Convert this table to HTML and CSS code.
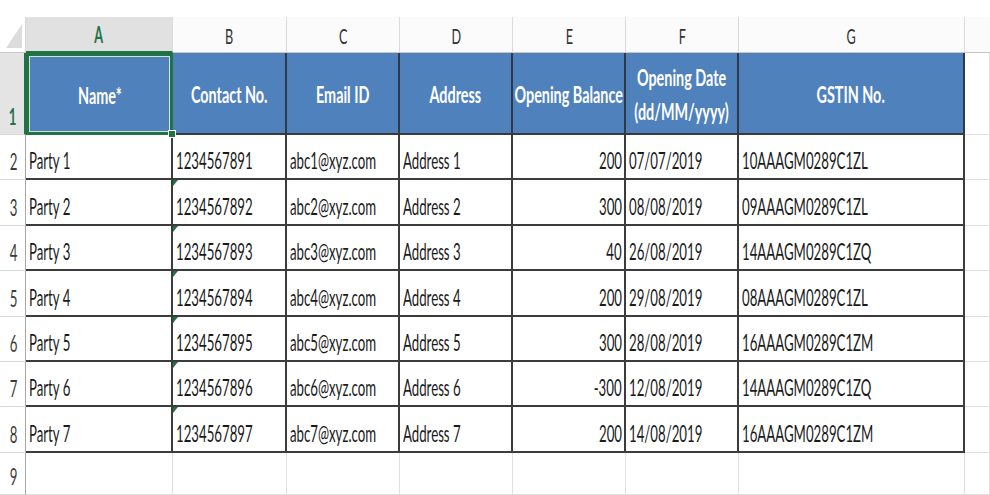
FILE: index.html
```html
<!DOCTYPE html>
<html>
<head>
<meta charset="utf-8">
<link rel="stylesheet" href="styles.css">
</head>
<body>
<div class="sheet">
  <div class="top-gap"></div>
  <div class="grid">
    <div class="corner"><svg width="26" height="36" viewBox="0 0 26 36"><polygon points="22,7 22,31 6,31" fill="#dcdcdc"/></svg></div>
    <div class="colhead sel"><span class="t c">A</span></div>
    <div class="colhead"><span class="t c">B</span></div>
    <div class="colhead"><span class="t c">C</span></div>
    <div class="colhead"><span class="t c">D</span></div>
    <div class="colhead"><span class="t c">E</span></div>
    <div class="colhead"><span class="t c">F</span></div>
    <div class="colhead"><span class="t c">G</span></div>
    <div class="colhead last"></div>

    <div class="rowhead selrow"><span class="t">1</span></div>
    <div class="hd active"><span class="t c">Name*</span><i class="handle"></i></div>
    <div class="hd"><span class="t c">Contact No.</span></div>
    <div class="hd"><span class="t c">Email ID</span></div>
    <div class="hd"><span class="t c">Address</span></div>
    <div class="hd"><span class="t c">Opening Balance</span></div>
    <div class="hd two"><span class="t c">Opening Date<br>(dd/MM/yyyy)</span></div>
    <div class="hd"><span class="t c">GSTIN No.</span></div>
    <div class="empty"></div>

    <div class="rowhead"><span class="t">2</span></div>
    <div class="cell"><span class="t">Party 1</span></div>
    <div class="cell"><span class="t">1234567891</span></div>
    <div class="cell"><span class="t">abc1@xyz.com</span></div>
    <div class="cell"><span class="t">Address 1</span></div>
    <div class="cell num"><span class="t r">200</span></div>
    <div class="cell"><span class="t">07/07/2019</span></div>
    <div class="cell"><span class="t">10AAAGM0289C1ZL</span></div>
    <div class="empty"></div>

    <div class="rowhead"><span class="t">3</span></div>
    <div class="cell"><span class="t">Party 2</span></div>
    <div class="cell tri"><span class="t">1234567892</span></div>
    <div class="cell"><span class="t">abc2@xyz.com</span></div>
    <div class="cell"><span class="t">Address 2</span></div>
    <div class="cell num"><span class="t r">300</span></div>
    <div class="cell"><span class="t">08/08/2019</span></div>
    <div class="cell"><span class="t">09AAAGM0289C1ZL</span></div>
    <div class="empty"></div>

    <div class="rowhead"><span class="t">4</span></div>
    <div class="cell"><span class="t">Party 3</span></div>
    <div class="cell tri"><span class="t">1234567893</span></div>
    <div class="cell"><span class="t">abc3@xyz.com</span></div>
    <div class="cell"><span class="t">Address 3</span></div>
    <div class="cell num"><span class="t r">40</span></div>
    <div class="cell"><span class="t">26/08/2019</span></div>
    <div class="cell"><span class="t">14AAAGM0289C1ZQ</span></div>
    <div class="empty"></div>

    <div class="rowhead"><span class="t">5</span></div>
    <div class="cell"><span class="t">Party 4</span></div>
    <div class="cell tri"><span class="t">1234567894</span></div>
    <div class="cell"><span class="t">abc4@xyz.com</span></div>
    <div class="cell"><span class="t">Address 4</span></div>
    <div class="cell num"><span class="t r">200</span></div>
    <div class="cell"><span class="t">29/08/2019</span></div>
    <div class="cell"><span class="t">08AAAGM0289C1ZL</span></div>
    <div class="empty"></div>

    <div class="rowhead"><span class="t">6</span></div>
    <div class="cell"><span class="t">Party 5</span></div>
    <div class="cell tri"><span class="t">1234567895</span></div>
    <div class="cell"><span class="t">abc5@xyz.com</span></div>
    <div class="cell"><span class="t">Address 5</span></div>
    <div class="cell num"><span class="t r">300</span></div>
    <div class="cell"><span class="t">28/08/2019</span></div>
    <div class="cell"><span class="t">16AAAGM0289C1ZM</span></div>
    <div class="empty"></div>

    <div class="rowhead"><span class="t">7</span></div>
    <div class="cell"><span class="t">Party 6</span></div>
    <div class="cell tri"><span class="t">1234567896</span></div>
    <div class="cell"><span class="t">abc6@xyz.com</span></div>
    <div class="cell"><span class="t">Address 6</span></div>
    <div class="cell num"><span class="t r">-300</span></div>
    <div class="cell"><span class="t">12/08/2019</span></div>
    <div class="cell"><span class="t">14AAAGM0289C1ZQ</span></div>
    <div class="empty"></div>

    <div class="rowhead"><span class="t">8</span></div>
    <div class="cell"><span class="t">Party 7</span></div>
    <div class="cell tri"><span class="t">1234567897</span></div>
    <div class="cell"><span class="t">abc7@xyz.com</span></div>
    <div class="cell"><span class="t">Address 7</span></div>
    <div class="cell num"><span class="t r">200</span></div>
    <div class="cell"><span class="t">14/08/2019</span></div>
    <div class="cell"><span class="t">16AAAGM0289C1ZM</span></div>
    <div class="empty"></div>

    <div class="rowhead"><span class="t">9</span></div>
    <div class="empty"></div>
    <div class="empty"></div>
    <div class="empty"></div>
    <div class="empty"></div>
    <div class="empty"></div>
    <div class="empty"></div>
    <div class="empty"></div>
    <div class="empty"></div>
  </div>
</div>
</body>
</html>
```
FILE: styles.css
```css
* { box-sizing: border-box; }
html, body { margin: 0; padding: 0; background: #ffffff; }
body { width: 990px; height: 495px; overflow: hidden; font-family: Lato, "Open Sans", sans-serif; color: #1a1a1a; }
.sheet { display: flex; flex-direction: column; height: 495px; }
.top-gap { height: 17px; flex: none; }
.grid {
  flex: 1;
  display: grid;
  grid-template-columns: 26px 147px 114px 113px 113px 113px 113px 226px 1fr;
  grid-template-rows: 36px 82px repeat(7, 45.4px) 1fr;
}
.t {
  display: inline-block;
  white-space: nowrap;
  font-size: 23px;
  line-height: 26px;
  transform: scaleX(0.575);
  transform-origin: left bottom;
}
.t.c { transform-origin: center bottom; }
.t.r { transform-origin: right bottom; }

.corner { background: #ffffff; border-right: 1px solid #d8d8d8; border-bottom: 1px solid #c8c8c8; }
.corner svg { display: block; }
.colhead {
  display: flex; align-items: center; justify-content: center;
  background: #fbfbfb;
  border-right: 1px solid #dadada;
  border-bottom: 1px solid #c6c6c6;
  color: #333333;
  padding-top: 2px;
}
.colhead .t { font-size: 22px; }
.colhead.sel { background: #e1e1e1; color: #217346; border-bottom: 2px solid #217346; }
.colhead.sel .t { font-weight: 700; }
.colhead.last { border-right: none; }

.rowhead {
  display: flex; align-items: flex-end; justify-content: center;
  padding: 0 0 5px 2px;
  background: #ffffff;
  border-right: 1px solid #a8a8a8;
  border-bottom: 1px solid #dadada;
  color: #3c3c3c;
}
.rowhead .t { transform-origin: center bottom; }
.rowhead.selrow { background: #e4e4e4; color: #217346; border-right: 2px solid #217346; }
.rowhead.selrow .t { font-weight: 700; }

.hd {
  position: relative;
  display: flex; align-items: center; justify-content: center;
  background: #4f81bd;
  color: #ffffff;
  border-right: 2px solid #2f3a48;
  border-bottom: 2px solid #3a3a3a;
  padding-top: 2px;
}
.hd .t { font-weight: 700; transform: scaleX(0.625); }
.hd.two .t { line-height: 34px; text-align: center; }
.hd.active { border: 3px solid #217346; box-shadow: inset 0 0 0 1px #cfe3d6; }
.handle {
  position: absolute; right: -6px; bottom: -6px;
  width: 8px; height: 8px;
  background: #217346;
  border: 1px solid #ffffff;
  z-index: 2;
}

.cell {
  position: relative;
  display: flex; align-items: flex-end;
  padding: 0 2px 5px 3px;
  border-right: 2px solid #3c3c3c;
  border-bottom: 2px solid #3c3c3c;
  background: #ffffff;
}
.cell.num { justify-content: flex-end; padding-right: 2px; }
.cell.tri::before {
  content: "";
  position: absolute; left: 0; top: 0;
  width: 0; height: 0;
  border-top: 6px solid #217346;
  border-right: 5px solid transparent;
}
.empty {
  border-right: 1px solid #e0e0e0;
  border-bottom: 1px solid #e0e0e0;
}
```
